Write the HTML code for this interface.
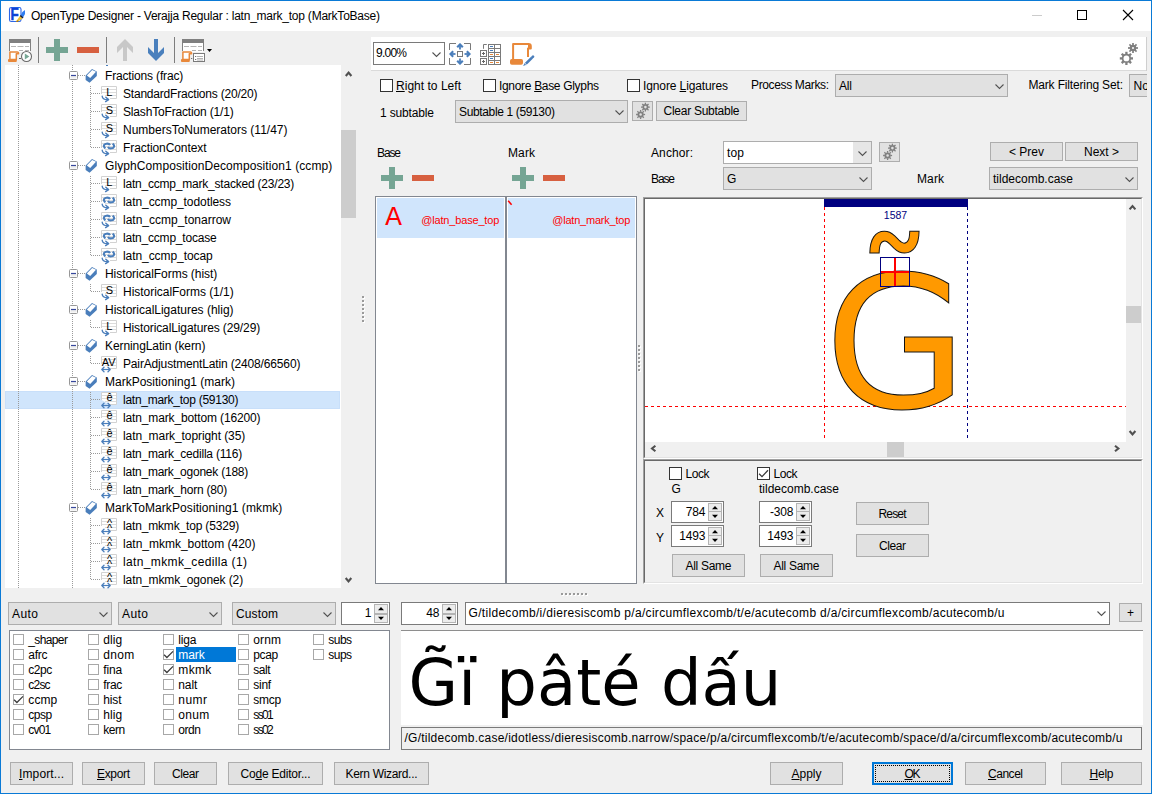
<!DOCTYPE html>
<html><head><meta charset="utf-8"><title>OpenType Designer</title><style>html,body{margin:0;padding:0;background:#f0f0f0;}
#w{position:relative;width:1152px;height:794px;overflow:hidden;font-family:"Liberation Sans",sans-serif;font-size:12px;color:#000;}
#w div,#w span,#w svg{position:absolute;}
#w span{white-space:pre;}
#w u{text-decoration:underline;text-underline-offset:1px;}
</style></head><body><div id="w">
<div style="left:0px;top:0px;width:1152px;height:794px;background:#f0f0f0;"></div>
<div style="left:1px;top:1px;width:1150px;height:30px;background:#fff;"></div>
<svg style="left:8px;top:6px;" width="18" height="18" viewBox="0 0 18 18"><rect x="1.5" y="1.5" width="11.5" height="14" rx="1.8" fill="#fff" stroke="#2a66e8" stroke-width="1.1"/>
<text transform="translate(2.5,14) scale(0.86,1)" font-family="'Liberation Sans',sans-serif" font-weight="bold" font-size="15.6" fill="#0c43d6" stroke="#0c43d6" stroke-width="0.5">F</text>
<path d="M17 4 L14.4 6 L12.5 9.6 L15 11.6 L17 8Z" fill="#2f7df0"/><path d="M12.2 9.6 L15 12" stroke="#1a1a2a" stroke-width="1.6"/>
<path d="M11.8 10.2 L14.4 12.4 L9.2 16 L8 15.6Z" fill="#f0c030"/><path d="M8 15.6 L9.2 16 L10.4 15.2 L9.2 14.2Z" fill="#9a6a10"/></svg>
<span style="left:31px;top:9px;line-height:14px;letter-spacing:-0.23px;">OpenType Designer - Verajja Regular : latn_mark_top (MarkToBase)</span>
<div style="left:1032px;top:15px;width:10px;height:1px;background:#cccccc;"></div>
<div style="left:1077px;top:10px;width:10px;height:10px;border:1px solid #000;box-sizing:border-box;"></div>
<svg style="left:1122px;top:9px;" width="12" height="12" viewBox="0 0 12 12"><path d="M1 1 L11 11 M11 1 L1 11" stroke="#000" stroke-width="1.1" fill="none"/></svg>
<svg style="left:5px;top:36px;" width="30" height="30" viewBox="0 0 30 30"><rect x="4" y="3" width="22" height="4" fill="#808080"/>
<path d="M4.5 7 V15 M25.5 7 V15" stroke="#808080" fill="none"/>
<rect x="5" y="7" width="20" height="9" fill="#fff"/>
<path d="M6 10.5 h5 M12.5 10.5 h6 M20 10.5 h4 M14 14.5 h4 M20 14.5 h4" stroke="#b4b4b4" fill="none"/><path d="M4.9 15.9 H12.4 Q13.5 15.9 13.5 17 V17.8 H11.3 V23.6 H4.9 Z" fill="#fff" stroke="#e8883a" stroke-width="1.5" stroke-linejoin="round"/>
<rect x="3" y="23.1" width="8.8" height="2.9" rx="0.9" fill="#e8883a"/><path d="M14 22.5 h2" stroke="#666" /><circle cx="21.5" cy="20.5" r="5" fill="#fff" stroke="#6a6a6a" stroke-width="1.1"/><path d="M19.8 17.6 L24.4 20.5 L19.8 23.4Z" fill="#78a896"/></svg>
<div style="left:38px;top:37px;width:1px;height:26px;background:#7d7d7d;"></div>
<div style="left:46px;top:47px;width:22px;height:6px;background:#75a594;"></div>
<div style="left:54px;top:39px;width:6px;height:22px;background:#75a594;"></div>
<div style="left:77px;top:47px;width:22px;height:6px;background:#d76040;"></div>
<div style="left:106px;top:37px;width:1px;height:26px;background:#7d7d7d;"></div>
<svg style="left:117px;top:39px;" width="16" height="22" viewBox="0 0 16 22"><polygon points="8,0 16,8 16,14 10,8 10,22 6,22 6,8 0,14 0,8" fill="#c8c8c8"/></svg>
<svg style="left:148px;top:39px;" width="16" height="22" viewBox="0 0 16 22"><polygon points="8,0 16,8 16,14 10,8 10,22 6,22 6,8 0,14 0,8" fill="#4a80bd" transform="translate(0,22) scale(1,-1)"/></svg>
<div style="left:174px;top:37px;width:1px;height:26px;background:#7d7d7d;"></div>
<svg style="left:179px;top:36px;" width="36" height="30" viewBox="0 0 36 30"><rect x="3" y="3" width="22" height="4" fill="#808080"/>
<path d="M3.5 7 V15 M24.5 7 V15" stroke="#808080" fill="none"/>
<rect x="4" y="7" width="20" height="9" fill="#fff"/>
<path d="M5 10.5 h5 M11.5 10.5 h6 M19 10.5 h4 M13 14.5 h4 M19 14.5 h4" stroke="#b4b4b4" fill="none"/><path d="M3.9 15.9 H11.4 Q12.5 15.9 12.5 17 V17.8 H10.3 V23.6 H3.9 Z" fill="#fff" stroke="#e8883a" stroke-width="1.5" stroke-linejoin="round"/>
<rect x="2" y="23.1" width="8.8" height="2.9" rx="0.9" fill="#e8883a"/><rect x="14.5" y="17.5" width="11" height="8" fill="#fff" stroke="#7a7a7a"/><path d="M18 20.5 h6 M18 22.5 h6 M18 24 h6" stroke="#a0a0a0" stroke-width="0.8"/><path d="M16.2 20.5h1M16.2 23.5h1M12.2 22.5h1" stroke="#555"/><path d="M28 13 h5 l-2.5 3z" fill="#000"/></svg>
<div style="left:5px;top:65px;width:336px;height:523px;background:#fff;"></div>
<div style="left:5px;top:391px;width:335px;height:18px;background:#d0e5fc;box-sizing:border-box;border:1px solid #c8dffa;"></div>
<span style="left:105px;top:69px;line-height:14px;letter-spacing:-0.159px;">Fractions (frac)</span>
<span style="left:123px;top:87px;line-height:14px;letter-spacing:-0.204px;">StandardFractions (20/20)</span>
<span style="left:123px;top:105px;line-height:14px;letter-spacing:-0.167px;">SlashToFraction (1/1)</span>
<span style="left:123px;top:123px;line-height:14px;letter-spacing:-0.001px;">NumbersToNumerators (11/47)</span>
<span style="left:123px;top:141px;line-height:14px;letter-spacing:-0.086px;">FractionContext</span>
<span style="left:105px;top:159px;line-height:14px;letter-spacing:0.089px;">GlyphCompositionDecomposition1 (ccmp)</span>
<span style="left:123px;top:177px;line-height:14px;letter-spacing:-0.211px;">latn_ccmp_mark_stacked (23/23)</span>
<span style="left:123px;top:195px;line-height:14px;letter-spacing:-0.078px;">latn_ccmp_todotless</span>
<span style="left:123px;top:213px;line-height:14px;letter-spacing:-0.004px;">latn_ccmp_tonarrow</span>
<span style="left:123px;top:231px;line-height:14px;letter-spacing:-0.202px;">latn_ccmp_tocase</span>
<span style="left:123px;top:249px;line-height:14px;letter-spacing:-0.074px;">latn_ccmp_tocap</span>
<span style="left:105px;top:267px;line-height:14px;letter-spacing:-0.05px;">HistoricalForms (hist)</span>
<span style="left:123px;top:285px;line-height:14px;letter-spacing:-0.033px;">HistoricalForms (1/1)</span>
<span style="left:105px;top:303px;line-height:14px;letter-spacing:-0.005px;">HistoricalLigatures (hlig)</span>
<span style="left:123px;top:321px;line-height:14px;letter-spacing:-0.11px;">HistoricalLigatures (29/29)</span>
<span style="left:105px;top:339px;line-height:14px;letter-spacing:-0.092px;">KerningLatin (kern)</span>
<span style="left:123px;top:357px;line-height:14px;letter-spacing:-0.152px;">PairAdjustmentLatin (2408/66560)</span>
<span style="left:105px;top:375px;line-height:14px;letter-spacing:-0.002px;">MarkPositioning1 (mark)</span>
<span style="left:123px;top:393px;line-height:14px;letter-spacing:-0.262px;">latn_mark_top (59130)</span>
<span style="left:123px;top:411px;line-height:14px;letter-spacing:-0.137px;">latn_mark_bottom (16200)</span>
<span style="left:123px;top:429px;line-height:14px;letter-spacing:-0.08px;">latn_mark_topright (35)</span>
<span style="left:123px;top:447px;line-height:14px;letter-spacing:-0.211px;">latn_mark_cedilla (116)</span>
<span style="left:123px;top:465px;line-height:14px;letter-spacing:-0.228px;">latn_mark_ogonek (188)</span>
<span style="left:123px;top:483px;line-height:14px;letter-spacing:-0.209px;">latn_mark_horn (80)</span>
<span style="left:105px;top:501px;line-height:14px;letter-spacing:0.093px;">MarkToMarkPositioning1 (mkmk)</span>
<span style="left:123px;top:519px;line-height:14px;letter-spacing:-0.168px;">latn_mkmk_top (5329)</span>
<span style="left:123px;top:537px;line-height:14px;letter-spacing:-0.011px;">latn_mkmk_bottom (420)</span>
<span style="left:123px;top:555px;line-height:14px;letter-spacing:0.364px;">latn_mkmk_cedilla (1)</span>
<span style="left:123px;top:573px;line-height:14px;letter-spacing:-0.098px;">latn_mkmk_ogonek (2)</span>
<svg style="left:0px;top:0px;pointer-events:none;" width="360" height="600" viewBox="0 0 360 600"><path d="M18.5 65 V588 M72.5 65 V588" stroke="#9a9a9a" stroke-width="1" stroke-dasharray="1 1" fill="none"/><path d="M78 75.5 H85" stroke="#9a9a9a" stroke-width="1" stroke-dasharray="1 1" fill="none"/><path d="M90.5 86 V148" stroke="#9a9a9a" stroke-width="1" stroke-dasharray="1 1" fill="none"/><path d="M91 93.5 H101" stroke="#9a9a9a" stroke-width="1" stroke-dasharray="1 1" fill="none"/><path d="M91 111.5 H101" stroke="#9a9a9a" stroke-width="1" stroke-dasharray="1 1" fill="none"/><path d="M91 129.5 H101" stroke="#9a9a9a" stroke-width="1" stroke-dasharray="1 1" fill="none"/><path d="M91 147.5 H101" stroke="#9a9a9a" stroke-width="1" stroke-dasharray="1 1" fill="none"/><path d="M78 165.5 H85" stroke="#9a9a9a" stroke-width="1" stroke-dasharray="1 1" fill="none"/><path d="M90.5 176 V256" stroke="#9a9a9a" stroke-width="1" stroke-dasharray="1 1" fill="none"/><path d="M91 183.5 H101" stroke="#9a9a9a" stroke-width="1" stroke-dasharray="1 1" fill="none"/><path d="M91 201.5 H101" stroke="#9a9a9a" stroke-width="1" stroke-dasharray="1 1" fill="none"/><path d="M91 219.5 H101" stroke="#9a9a9a" stroke-width="1" stroke-dasharray="1 1" fill="none"/><path d="M91 237.5 H101" stroke="#9a9a9a" stroke-width="1" stroke-dasharray="1 1" fill="none"/><path d="M91 255.5 H101" stroke="#9a9a9a" stroke-width="1" stroke-dasharray="1 1" fill="none"/><path d="M78 273.5 H85" stroke="#9a9a9a" stroke-width="1" stroke-dasharray="1 1" fill="none"/><path d="M90.5 284 V292" stroke="#9a9a9a" stroke-width="1" stroke-dasharray="1 1" fill="none"/><path d="M91 291.5 H101" stroke="#9a9a9a" stroke-width="1" stroke-dasharray="1 1" fill="none"/><path d="M78 309.5 H85" stroke="#9a9a9a" stroke-width="1" stroke-dasharray="1 1" fill="none"/><path d="M90.5 320 V328" stroke="#9a9a9a" stroke-width="1" stroke-dasharray="1 1" fill="none"/><path d="M91 327.5 H101" stroke="#9a9a9a" stroke-width="1" stroke-dasharray="1 1" fill="none"/><path d="M78 345.5 H85" stroke="#9a9a9a" stroke-width="1" stroke-dasharray="1 1" fill="none"/><path d="M90.5 356 V364" stroke="#9a9a9a" stroke-width="1" stroke-dasharray="1 1" fill="none"/><path d="M91 363.5 H101" stroke="#9a9a9a" stroke-width="1" stroke-dasharray="1 1" fill="none"/><path d="M78 381.5 H85" stroke="#9a9a9a" stroke-width="1" stroke-dasharray="1 1" fill="none"/><path d="M90.5 392 V490" stroke="#9a9a9a" stroke-width="1" stroke-dasharray="1 1" fill="none"/><path d="M91 399.5 H101" stroke="#9a9a9a" stroke-width="1" stroke-dasharray="1 1" fill="none"/><path d="M91 417.5 H101" stroke="#9a9a9a" stroke-width="1" stroke-dasharray="1 1" fill="none"/><path d="M91 435.5 H101" stroke="#9a9a9a" stroke-width="1" stroke-dasharray="1 1" fill="none"/><path d="M91 453.5 H101" stroke="#9a9a9a" stroke-width="1" stroke-dasharray="1 1" fill="none"/><path d="M91 471.5 H101" stroke="#9a9a9a" stroke-width="1" stroke-dasharray="1 1" fill="none"/><path d="M91 489.5 H101" stroke="#9a9a9a" stroke-width="1" stroke-dasharray="1 1" fill="none"/><path d="M78 507.5 H85" stroke="#9a9a9a" stroke-width="1" stroke-dasharray="1 1" fill="none"/><path d="M90.5 518 V580" stroke="#9a9a9a" stroke-width="1" stroke-dasharray="1 1" fill="none"/><path d="M91 525.5 H101" stroke="#9a9a9a" stroke-width="1" stroke-dasharray="1 1" fill="none"/><path d="M91 543.5 H101" stroke="#9a9a9a" stroke-width="1" stroke-dasharray="1 1" fill="none"/><path d="M91 561.5 H101" stroke="#9a9a9a" stroke-width="1" stroke-dasharray="1 1" fill="none"/><path d="M91 579.5 H101" stroke="#9a9a9a" stroke-width="1" stroke-dasharray="1 1" fill="none"/><rect x="69.5" y="71.5" width="8" height="8" rx="1" fill="#fff" stroke="#979797"/><rect x="70.5" y="76" width="6" height="2.5" fill="#eee"/><path d="M71 75.5 H76" stroke="#36479c" stroke-width="1.2"/><path d="M85.6 75.5 L92 69 L96.8 71.4 L96.8 76 L89.6 82.8 L85.6 80 Z" fill="#4a7ebb"/><path d="M86.8 75.5 L92.2 70 L96 71.8 L90.2 77.9 Z" fill="#fff"/><path d="M101.5 94 V86.5 H116.5 V98.5 H110" stroke="#d2d2d2" fill="#fff"/><path d="M102 89.5 H116 M102 92.5 H116 M105 95.5 H116" stroke="#dcdcdc" fill="none"/><text x="109.3" y="96.2" text-anchor="middle" font-family="'Liberation Sans',sans-serif" font-size="11" font-weight="normal" fill="#000">L</text><path d="M102.2 96.2 C102.5 99 105 99.8 108 99.6" stroke="#4a7ebb" stroke-width="1.4" fill="none" stroke-linecap="round"/><path d="M105.8 97.2 L108.6 99.6 L105.6 101.6" stroke="#4a7ebb" stroke-width="1.4" fill="none" stroke-linecap="round" stroke-linejoin="round"/><path d="M101.5 112 V104.5 H116.5 V116.5 H110" stroke="#d2d2d2" fill="#fff"/><path d="M102 107.5 H116 M102 110.5 H116 M105 113.5 H116" stroke="#dcdcdc" fill="none"/><text x="109.3" y="114.2" text-anchor="middle" font-family="'Liberation Sans',sans-serif" font-size="11" font-weight="normal" fill="#000">S</text><path d="M102.2 114.2 C102.5 117 105 117.8 108 117.6" stroke="#4a7ebb" stroke-width="1.4" fill="none" stroke-linecap="round"/><path d="M105.8 115.2 L108.6 117.6 L105.6 119.6" stroke="#4a7ebb" stroke-width="1.4" fill="none" stroke-linecap="round" stroke-linejoin="round"/><path d="M101.5 130 V122.5 H116.5 V134.5 H110" stroke="#d2d2d2" fill="#fff"/><path d="M102 125.5 H116 M102 128.5 H116 M105 131.5 H116" stroke="#dcdcdc" fill="none"/><text x="109.3" y="132.2" text-anchor="middle" font-family="'Liberation Sans',sans-serif" font-size="11" font-weight="normal" fill="#000">S</text><path d="M102.2 132.2 C102.5 135 105 135.8 108 135.6" stroke="#4a7ebb" stroke-width="1.4" fill="none" stroke-linecap="round"/><path d="M105.8 133.2 L108.6 135.6 L105.6 137.6" stroke="#4a7ebb" stroke-width="1.4" fill="none" stroke-linecap="round" stroke-linejoin="round"/><path d="M101.5 148 V140.5 H116.5 V152.5 H110" stroke="#d2d2d2" fill="#fff"/><path d="M102 143.5 H116 M102 146.5 H116 M105 149.5 H116" stroke="#dcdcdc" fill="none"/><path d="M110 145.2 C109.3 143.6 107.5 143.6 106.5 143.7 C104.5 143.9 103.6 145.2 104 146.6 C104.2 147.4 104.7 147.9 105.4 148.4" stroke="#4a7ebb" stroke-width="2.1" fill="none"/><path d="M108 146.8 C108.7 148.4 110.5 148.4 111.5 148.3 C113.5 148.1 114.4 146.8 114 145.4 C113.8 144.6 113.3 144.1 112.6 143.6" stroke="#4a7ebb" stroke-width="2.1" fill="none"/><path d="M102.2 150.2 C102.5 153 105 153.8 108 153.6" stroke="#4a7ebb" stroke-width="1.4" fill="none" stroke-linecap="round"/><path d="M105.8 151.2 L108.6 153.6 L105.6 155.6" stroke="#4a7ebb" stroke-width="1.4" fill="none" stroke-linecap="round" stroke-linejoin="round"/><rect x="69.5" y="161.5" width="8" height="8" rx="1" fill="#fff" stroke="#979797"/><rect x="70.5" y="166" width="6" height="2.5" fill="#eee"/><path d="M71 165.5 H76" stroke="#36479c" stroke-width="1.2"/><path d="M85.6 165.5 L92 159 L96.8 161.4 L96.8 166 L89.6 172.8 L85.6 170 Z" fill="#4a7ebb"/><path d="M86.8 165.5 L92.2 160 L96 161.8 L90.2 167.9 Z" fill="#fff"/><path d="M101.5 184 V176.5 H116.5 V188.5 H110" stroke="#d2d2d2" fill="#fff"/><path d="M102 179.5 H116 M102 182.5 H116 M105 185.5 H116" stroke="#dcdcdc" fill="none"/><text x="109.3" y="186.2" text-anchor="middle" font-family="'Liberation Sans',sans-serif" font-size="11" font-weight="normal" fill="#000">L</text><path d="M102.2 186.2 C102.5 189 105 189.8 108 189.6" stroke="#4a7ebb" stroke-width="1.4" fill="none" stroke-linecap="round"/><path d="M105.8 187.2 L108.6 189.6 L105.6 191.6" stroke="#4a7ebb" stroke-width="1.4" fill="none" stroke-linecap="round" stroke-linejoin="round"/><path d="M101.5 202 V194.5 H116.5 V206.5 H110" stroke="#d2d2d2" fill="#fff"/><path d="M102 197.5 H116 M102 200.5 H116 M105 203.5 H116" stroke="#dcdcdc" fill="none"/><path d="M110 199.2 C109.3 197.6 107.5 197.6 106.5 197.7 C104.5 197.9 103.6 199.2 104 200.6 C104.2 201.4 104.7 201.9 105.4 202.4" stroke="#4a7ebb" stroke-width="2.1" fill="none"/><path d="M108 200.8 C108.7 202.4 110.5 202.4 111.5 202.3 C113.5 202.1 114.4 200.8 114 199.4 C113.8 198.6 113.3 198.1 112.6 197.6" stroke="#4a7ebb" stroke-width="2.1" fill="none"/><path d="M102.2 204.2 C102.5 207 105 207.8 108 207.6" stroke="#4a7ebb" stroke-width="1.4" fill="none" stroke-linecap="round"/><path d="M105.8 205.2 L108.6 207.6 L105.6 209.6" stroke="#4a7ebb" stroke-width="1.4" fill="none" stroke-linecap="round" stroke-linejoin="round"/><path d="M101.5 220 V212.5 H116.5 V224.5 H110" stroke="#d2d2d2" fill="#fff"/><path d="M102 215.5 H116 M102 218.5 H116 M105 221.5 H116" stroke="#dcdcdc" fill="none"/><path d="M110 217.2 C109.3 215.6 107.5 215.6 106.5 215.7 C104.5 215.9 103.6 217.2 104 218.6 C104.2 219.4 104.7 219.9 105.4 220.4" stroke="#4a7ebb" stroke-width="2.1" fill="none"/><path d="M108 218.8 C108.7 220.4 110.5 220.4 111.5 220.3 C113.5 220.1 114.4 218.8 114 217.4 C113.8 216.6 113.3 216.1 112.6 215.6" stroke="#4a7ebb" stroke-width="2.1" fill="none"/><path d="M102.2 222.2 C102.5 225 105 225.8 108 225.6" stroke="#4a7ebb" stroke-width="1.4" fill="none" stroke-linecap="round"/><path d="M105.8 223.2 L108.6 225.6 L105.6 227.6" stroke="#4a7ebb" stroke-width="1.4" fill="none" stroke-linecap="round" stroke-linejoin="round"/><path d="M101.5 238 V230.5 H116.5 V242.5 H110" stroke="#d2d2d2" fill="#fff"/><path d="M102 233.5 H116 M102 236.5 H116 M105 239.5 H116" stroke="#dcdcdc" fill="none"/><path d="M110 235.2 C109.3 233.6 107.5 233.6 106.5 233.7 C104.5 233.9 103.6 235.2 104 236.6 C104.2 237.4 104.7 237.9 105.4 238.4" stroke="#4a7ebb" stroke-width="2.1" fill="none"/><path d="M108 236.8 C108.7 238.4 110.5 238.4 111.5 238.3 C113.5 238.1 114.4 236.8 114 235.4 C113.8 234.6 113.3 234.1 112.6 233.6" stroke="#4a7ebb" stroke-width="2.1" fill="none"/><path d="M102.2 240.2 C102.5 243 105 243.8 108 243.6" stroke="#4a7ebb" stroke-width="1.4" fill="none" stroke-linecap="round"/><path d="M105.8 241.2 L108.6 243.6 L105.6 245.6" stroke="#4a7ebb" stroke-width="1.4" fill="none" stroke-linecap="round" stroke-linejoin="round"/><path d="M101.5 256 V248.5 H116.5 V260.5 H110" stroke="#d2d2d2" fill="#fff"/><path d="M102 251.5 H116 M102 254.5 H116 M105 257.5 H116" stroke="#dcdcdc" fill="none"/><path d="M110 253.2 C109.3 251.6 107.5 251.6 106.5 251.7 C104.5 251.9 103.6 253.2 104 254.6 C104.2 255.4 104.7 255.9 105.4 256.4" stroke="#4a7ebb" stroke-width="2.1" fill="none"/><path d="M108 254.8 C108.7 256.4 110.5 256.4 111.5 256.3 C113.5 256.1 114.4 254.8 114 253.4 C113.8 252.6 113.3 252.1 112.6 251.6" stroke="#4a7ebb" stroke-width="2.1" fill="none"/><path d="M102.2 258.2 C102.5 261 105 261.8 108 261.6" stroke="#4a7ebb" stroke-width="1.4" fill="none" stroke-linecap="round"/><path d="M105.8 259.2 L108.6 261.6 L105.6 263.6" stroke="#4a7ebb" stroke-width="1.4" fill="none" stroke-linecap="round" stroke-linejoin="round"/><rect x="69.5" y="269.5" width="8" height="8" rx="1" fill="#fff" stroke="#979797"/><rect x="70.5" y="274" width="6" height="2.5" fill="#eee"/><path d="M71 273.5 H76" stroke="#36479c" stroke-width="1.2"/><path d="M85.6 273.5 L92 267 L96.8 269.4 L96.8 274 L89.6 280.8 L85.6 278 Z" fill="#4a7ebb"/><path d="M86.8 273.5 L92.2 268 L96 269.8 L90.2 275.9 Z" fill="#fff"/><path d="M101.5 292 V284.5 H116.5 V296.5 H110" stroke="#d2d2d2" fill="#fff"/><path d="M102 287.5 H116 M102 290.5 H116 M105 293.5 H116" stroke="#dcdcdc" fill="none"/><text x="109.3" y="294.2" text-anchor="middle" font-family="'Liberation Sans',sans-serif" font-size="11" font-weight="normal" fill="#000">S</text><path d="M102.2 294.2 C102.5 297 105 297.8 108 297.6" stroke="#4a7ebb" stroke-width="1.4" fill="none" stroke-linecap="round"/><path d="M105.8 295.2 L108.6 297.6 L105.6 299.6" stroke="#4a7ebb" stroke-width="1.4" fill="none" stroke-linecap="round" stroke-linejoin="round"/><rect x="69.5" y="305.5" width="8" height="8" rx="1" fill="#fff" stroke="#979797"/><rect x="70.5" y="310" width="6" height="2.5" fill="#eee"/><path d="M71 309.5 H76" stroke="#36479c" stroke-width="1.2"/><path d="M85.6 309.5 L92 303 L96.8 305.4 L96.8 310 L89.6 316.8 L85.6 314 Z" fill="#4a7ebb"/><path d="M86.8 309.5 L92.2 304 L96 305.8 L90.2 311.9 Z" fill="#fff"/><path d="M101.5 328 V320.5 H116.5 V332.5 H110" stroke="#d2d2d2" fill="#fff"/><path d="M102 323.5 H116 M102 326.5 H116 M105 329.5 H116" stroke="#dcdcdc" fill="none"/><text x="109.3" y="330.2" text-anchor="middle" font-family="'Liberation Sans',sans-serif" font-size="11" font-weight="normal" fill="#000">L</text><path d="M102.2 330.2 C102.5 333 105 333.8 108 333.6" stroke="#4a7ebb" stroke-width="1.4" fill="none" stroke-linecap="round"/><path d="M105.8 331.2 L108.6 333.6 L105.6 335.6" stroke="#4a7ebb" stroke-width="1.4" fill="none" stroke-linecap="round" stroke-linejoin="round"/><rect x="69.5" y="341.5" width="8" height="8" rx="1" fill="#fff" stroke="#979797"/><rect x="70.5" y="346" width="6" height="2.5" fill="#eee"/><path d="M71 345.5 H76" stroke="#36479c" stroke-width="1.2"/><path d="M85.6 345.5 L92 339 L96.8 341.4 L96.8 346 L89.6 352.8 L85.6 350 Z" fill="#4a7ebb"/><path d="M86.8 345.5 L92.2 340 L96 341.8 L90.2 347.9 Z" fill="#fff"/><path d="M101.5 364 V356.5 H116.5 V368.5 H110" stroke="#d2d2d2" fill="#fff"/><path d="M102 359.5 H116 M102 362.5 H116 M105 365.5 H116" stroke="#dcdcdc" fill="none"/><text x="108.6" y="365.6" text-anchor="middle" font-family="'Liberation Sans',sans-serif" font-size="11" font-weight="normal" fill="#000">AV</text><path d="M102 369.5 H110" stroke="#4a7ebb" stroke-width="1.2" fill="none"/><path d="M104 367.3 L101.8 369.5 L104 371.7 M108 367.3 L110.2 369.5 L108 371.7" stroke="#4a7ebb" stroke-width="1.3" fill="none" stroke-linecap="round" stroke-linejoin="round"/><rect x="69.5" y="377.5" width="8" height="8" rx="1" fill="#fff" stroke="#979797"/><rect x="70.5" y="382" width="6" height="2.5" fill="#eee"/><path d="M71 381.5 H76" stroke="#36479c" stroke-width="1.2"/><path d="M85.6 381.5 L92 375 L96.8 377.4 L96.8 382 L89.6 388.8 L85.6 386 Z" fill="#4a7ebb"/><path d="M86.8 381.5 L92.2 376 L96 377.8 L90.2 383.9 Z" fill="#fff"/><path d="M101.5 400 V392.5 H116.5 V404.5 H110" stroke="#d2d2d2" fill="#fff"/><path d="M102 395.5 H116 M102 398.5 H116 M105 401.5 H116" stroke="#dcdcdc" fill="none"/><text x="109.6" y="401.3" text-anchor="middle" font-family="'Liberation Sans',sans-serif" font-size="11" font-weight="normal" fill="#000">ê</text><path d="M102 405.5 H110" stroke="#4a7ebb" stroke-width="1.2" fill="none"/><path d="M104 403.3 L101.8 405.5 L104 407.7 M108 403.3 L110.2 405.5 L108 407.7" stroke="#4a7ebb" stroke-width="1.3" fill="none" stroke-linecap="round" stroke-linejoin="round"/><path d="M101.5 418 V410.5 H116.5 V422.5 H110" stroke="#d2d2d2" fill="#fff"/><path d="M102 413.5 H116 M102 416.5 H116 M105 419.5 H116" stroke="#dcdcdc" fill="none"/><text x="109.6" y="419.3" text-anchor="middle" font-family="'Liberation Sans',sans-serif" font-size="11" font-weight="normal" fill="#000">ê</text><path d="M102 423.5 H110" stroke="#4a7ebb" stroke-width="1.2" fill="none"/><path d="M104 421.3 L101.8 423.5 L104 425.7 M108 421.3 L110.2 423.5 L108 425.7" stroke="#4a7ebb" stroke-width="1.3" fill="none" stroke-linecap="round" stroke-linejoin="round"/><path d="M101.5 436 V428.5 H116.5 V440.5 H110" stroke="#d2d2d2" fill="#fff"/><path d="M102 431.5 H116 M102 434.5 H116 M105 437.5 H116" stroke="#dcdcdc" fill="none"/><text x="109.6" y="437.3" text-anchor="middle" font-family="'Liberation Sans',sans-serif" font-size="11" font-weight="normal" fill="#000">ê</text><path d="M102 441.5 H110" stroke="#4a7ebb" stroke-width="1.2" fill="none"/><path d="M104 439.3 L101.8 441.5 L104 443.7 M108 439.3 L110.2 441.5 L108 443.7" stroke="#4a7ebb" stroke-width="1.3" fill="none" stroke-linecap="round" stroke-linejoin="round"/><path d="M101.5 454 V446.5 H116.5 V458.5 H110" stroke="#d2d2d2" fill="#fff"/><path d="M102 449.5 H116 M102 452.5 H116 M105 455.5 H116" stroke="#dcdcdc" fill="none"/><text x="109.6" y="455.3" text-anchor="middle" font-family="'Liberation Sans',sans-serif" font-size="11" font-weight="normal" fill="#000">ê</text><path d="M102 459.5 H110" stroke="#4a7ebb" stroke-width="1.2" fill="none"/><path d="M104 457.3 L101.8 459.5 L104 461.7 M108 457.3 L110.2 459.5 L108 461.7" stroke="#4a7ebb" stroke-width="1.3" fill="none" stroke-linecap="round" stroke-linejoin="round"/><path d="M101.5 472 V464.5 H116.5 V476.5 H110" stroke="#d2d2d2" fill="#fff"/><path d="M102 467.5 H116 M102 470.5 H116 M105 473.5 H116" stroke="#dcdcdc" fill="none"/><text x="109.6" y="473.3" text-anchor="middle" font-family="'Liberation Sans',sans-serif" font-size="11" font-weight="normal" fill="#000">ê</text><path d="M102 477.5 H110" stroke="#4a7ebb" stroke-width="1.2" fill="none"/><path d="M104 475.3 L101.8 477.5 L104 479.7 M108 475.3 L110.2 477.5 L108 479.7" stroke="#4a7ebb" stroke-width="1.3" fill="none" stroke-linecap="round" stroke-linejoin="round"/><path d="M101.5 490 V482.5 H116.5 V494.5 H110" stroke="#d2d2d2" fill="#fff"/><path d="M102 485.5 H116 M102 488.5 H116 M105 491.5 H116" stroke="#dcdcdc" fill="none"/><text x="109.6" y="491.3" text-anchor="middle" font-family="'Liberation Sans',sans-serif" font-size="11" font-weight="normal" fill="#000">ê</text><path d="M102 495.5 H110" stroke="#4a7ebb" stroke-width="1.2" fill="none"/><path d="M104 493.3 L101.8 495.5 L104 497.7 M108 493.3 L110.2 495.5 L108 497.7" stroke="#4a7ebb" stroke-width="1.3" fill="none" stroke-linecap="round" stroke-linejoin="round"/><rect x="69.5" y="503.5" width="8" height="8" rx="1" fill="#fff" stroke="#979797"/><rect x="70.5" y="508" width="6" height="2.5" fill="#eee"/><path d="M71 507.5 H76" stroke="#36479c" stroke-width="1.2"/><path d="M85.6 507.5 L92 501 L96.8 503.4 L96.8 508 L89.6 514.8 L85.6 512 Z" fill="#4a7ebb"/><path d="M86.8 507.5 L92.2 502 L96 503.8 L90.2 509.9 Z" fill="#fff"/><path d="M101.5 526 V518.5 H116.5 V530.5 H110" stroke="#d2d2d2" fill="#fff"/><path d="M102 521.5 H116 M102 524.5 H116 M105 527.5 H116" stroke="#dcdcdc" fill="none"/><text x="109.5" y="527.2" text-anchor="middle" font-family="'Liberation Sans',sans-serif" font-size="11" font-weight="normal" fill="#000">^</text><text x="109.5" y="531.6" text-anchor="middle" font-family="'Liberation Sans',sans-serif" font-size="11" font-weight="normal" fill="#000">^</text><path d="M102 531.5 H110" stroke="#4a7ebb" stroke-width="1.2" fill="none"/><path d="M104 529.3 L101.8 531.5 L104 533.7 M108 529.3 L110.2 531.5 L108 533.7" stroke="#4a7ebb" stroke-width="1.3" fill="none" stroke-linecap="round" stroke-linejoin="round"/><path d="M101.5 544 V536.5 H116.5 V548.5 H110" stroke="#d2d2d2" fill="#fff"/><path d="M102 539.5 H116 M102 542.5 H116 M105 545.5 H116" stroke="#dcdcdc" fill="none"/><text x="109.5" y="545.2" text-anchor="middle" font-family="'Liberation Sans',sans-serif" font-size="11" font-weight="normal" fill="#000">^</text><text x="109.5" y="549.6" text-anchor="middle" font-family="'Liberation Sans',sans-serif" font-size="11" font-weight="normal" fill="#000">^</text><path d="M102 549.5 H110" stroke="#4a7ebb" stroke-width="1.2" fill="none"/><path d="M104 547.3 L101.8 549.5 L104 551.7 M108 547.3 L110.2 549.5 L108 551.7" stroke="#4a7ebb" stroke-width="1.3" fill="none" stroke-linecap="round" stroke-linejoin="round"/><path d="M101.5 562 V554.5 H116.5 V566.5 H110" stroke="#d2d2d2" fill="#fff"/><path d="M102 557.5 H116 M102 560.5 H116 M105 563.5 H116" stroke="#dcdcdc" fill="none"/><text x="109.5" y="563.2" text-anchor="middle" font-family="'Liberation Sans',sans-serif" font-size="11" font-weight="normal" fill="#000">^</text><text x="109.5" y="567.6" text-anchor="middle" font-family="'Liberation Sans',sans-serif" font-size="11" font-weight="normal" fill="#000">^</text><path d="M102 567.5 H110" stroke="#4a7ebb" stroke-width="1.2" fill="none"/><path d="M104 565.3 L101.8 567.5 L104 569.7 M108 565.3 L110.2 567.5 L108 569.7" stroke="#4a7ebb" stroke-width="1.3" fill="none" stroke-linecap="round" stroke-linejoin="round"/><path d="M101.5 580 V572.5 H116.5 V584.5 H110" stroke="#d2d2d2" fill="#fff"/><path d="M102 575.5 H116 M102 578.5 H116 M105 581.5 H116" stroke="#dcdcdc" fill="none"/><text x="109.5" y="581.2" text-anchor="middle" font-family="'Liberation Sans',sans-serif" font-size="11" font-weight="normal" fill="#000">^</text><text x="109.5" y="585.6" text-anchor="middle" font-family="'Liberation Sans',sans-serif" font-size="11" font-weight="normal" fill="#000">^</text><path d="M102 585.5 H110" stroke="#4a7ebb" stroke-width="1.2" fill="none"/><path d="M104 583.3 L101.8 585.5 L104 587.7 M108 583.3 L110.2 585.5 L108 587.7" stroke="#4a7ebb" stroke-width="1.3" fill="none" stroke-linecap="round" stroke-linejoin="round"/></svg>
<div style="left:106px;top:65px;width:2px;height:1px;background:#4a7ebb;"></div>
<svg style="left:341px;top:65px;" width="17" height="523" viewBox="0 0 17 523"><rect x="0" y="65" width="15" height="88" fill="#cdcdcd"/><path d="M4.8 11 L7.6 7.6 L10.4 11" stroke="#505050" stroke-width="2.1" fill="none"/><path d="M4.7 513 L7.5 516.4 L10.3 513" stroke="#505050" stroke-width="2.1" fill="none"/></svg>
<svg style="left:362px;top:296px;" width="3" height="28" viewBox="0 0 3 28"><rect x="1" y="1" width="2" height="2" fill="#fff"/><rect x="0" y="0" width="2" height="2" fill="#9a9a9a"/><rect x="1" y="5" width="2" height="2" fill="#fff"/><rect x="0" y="4" width="2" height="2" fill="#9a9a9a"/><rect x="1" y="9" width="2" height="2" fill="#fff"/><rect x="0" y="8" width="2" height="2" fill="#9a9a9a"/><rect x="1" y="13" width="2" height="2" fill="#fff"/><rect x="0" y="12" width="2" height="2" fill="#9a9a9a"/><rect x="1" y="17" width="2" height="2" fill="#fff"/><rect x="0" y="16" width="2" height="2" fill="#9a9a9a"/><rect x="1" y="21" width="2" height="2" fill="#fff"/><rect x="0" y="20" width="2" height="2" fill="#9a9a9a"/><rect x="1" y="25" width="2" height="2" fill="#fff"/><rect x="0" y="24" width="2" height="2" fill="#9a9a9a"/></svg>
<div style="left:371px;top:37px;width:775px;height:33px;background:#fff;"></div>
<div style="left:371px;top:70px;width:775px;height:1px;background:#dadada;"></div>
<div style="left:1146px;top:37px;width:1px;height:34px;background:#cfcfcf;"></div>
<div style="left:373px;top:42px;width:72px;height:23px;background:#fff;border:1px solid #7a7a7a;box-sizing:border-box;"></div>
<svg style="left:430.5px;top:50.5px;" width="11" height="8" viewBox="0 0 11 8"><path d="M1.5 1.5 L5.5 5.4 L9.5 1.5" stroke="#505050" stroke-width="1.05" fill="none"/></svg>
<span style="left:376px;top:46px;line-height:14px;letter-spacing:-0.758px;">9.00%</span>
<svg style="left:449px;top:43px;" width="22" height="22" viewBox="0 0 22 22"><path d="M0.5 7 V0.5 H7 M15 0.5 H21.5 V7 M21.5 15 V21.5 H15 M7 21.5 H0.5 V15" stroke="#7a7a7a" fill="none"/><rect x="8.5" y="8.5" width="5" height="5" fill="#fff" stroke="#7a7a7a"/><g transform="rotate(0 11 11)"><path d="M11 1.2 V6.5" stroke="#4a7ebb" stroke-width="1.8"/><path d="M8.2 4.2 L11 1.4 L13.8 4.2" stroke="#4a7ebb" stroke-width="2.1" fill="none" stroke-linejoin="miter"/></g><g transform="rotate(90 11 11)"><path d="M11 1.2 V6.5" stroke="#4a7ebb" stroke-width="1.8"/><path d="M8.2 4.2 L11 1.4 L13.8 4.2" stroke="#4a7ebb" stroke-width="2.1" fill="none" stroke-linejoin="miter"/></g><g transform="rotate(180 11 11)"><path d="M11 1.2 V6.5" stroke="#4a7ebb" stroke-width="1.8"/><path d="M8.2 4.2 L11 1.4 L13.8 4.2" stroke="#4a7ebb" stroke-width="2.1" fill="none" stroke-linejoin="miter"/></g><g transform="rotate(270 11 11)"><path d="M11 1.2 V6.5" stroke="#4a7ebb" stroke-width="1.8"/><path d="M8.2 4.2 L11 1.4 L13.8 4.2" stroke="#4a7ebb" stroke-width="2.1" fill="none" stroke-linejoin="miter"/></g></svg>
<svg style="left:480px;top:44px;" width="22" height="22" viewBox="0 0 22 22"><path d="M3.5 4.8 V0.5 H6.8" stroke="#7a7a7a" fill="none"/><rect x="0.5" y="6.5" width="6" height="6" fill="#fff" stroke="#7a7a7a"/><rect x="0.5" y="14.5" width="6" height="6" fill="#fff" stroke="#7a7a7a"/><path d="M2 9.5 h3 M3.5 8 v3 M2 17.5 h3 M3.5 16 v3" stroke="#666"/><rect x="8.5" y="0.5" width="12" height="20" fill="#fff" stroke="#7a7a7a"/><path d="M14.5 0.5 V20.5 M8.5 4.5 H20.5 M8.5 8.5 H20.5 M8.5 12.5 H20.5 M8.5 16.5 H20.5" stroke="#7a7a7a" fill="none"/><path d="M10 2.5 h3 M10 6.5 h3 M10 14.5 h3" stroke="#4a7ebb"/><path d="M10 10.5 h3 M16 10.5 h3 M10 18.5 h3 M16 18.5 h3" stroke="#e8883a"/></svg>
<svg style="left:510px;top:43px;" width="26" height="24" viewBox="0 0 26 24"><rect x="3" y="1" width="15" height="15" fill="#fff"/><path d="M3.1 16 V1 H18.6 Q20.8 1 20.8 3 V5.6 H18 V14" fill="none" stroke="#e8883a" stroke-width="2" stroke-linejoin="round"/><path d="M18 1 h1 q1.8 0 1.8 2 v2.6 h-2.8z" fill="#e8883a"/><rect x="0" y="15.9" width="13" height="5.8" rx="1.8" fill="#e8883a"/><path d="M22 14.6 L15.2 21.4" stroke="#4a7ebb" stroke-width="2.7"/><path d="M23 13.6 L22.5 14.1" stroke="#4a7ebb" stroke-width="2.7" stroke-linecap="round"/><path d="M14.6 20.4 L13 23 L15.9 21.9Z" fill="#4a7ebb"/><path d="M14 19.2 L16.8 22" stroke="#fff" stroke-width="0.7"/></svg>
<svg style="left:1119px;top:43px;" width="20" height="23" viewBox="0 0 20 23"><g transform="scale(1.0)"><circle cx="7.4" cy="15.4" r="3.8" fill="none" stroke="#7f7f7f" stroke-width="1.8000000000000003"/><path d="M11.60 15.40 L14.00 15.40" stroke="#7f7f7f" stroke-width="2.3"/><path d="M10.37 18.37 L12.07 20.07" stroke="#7f7f7f" stroke-width="2.3"/><path d="M7.40 19.60 L7.40 22.00" stroke="#7f7f7f" stroke-width="2.3"/><path d="M4.43 18.37 L2.73 20.07" stroke="#7f7f7f" stroke-width="2.3"/><path d="M3.20 15.40 L0.80 15.40" stroke="#7f7f7f" stroke-width="2.3"/><path d="M4.43 12.43 L2.73 10.73" stroke="#7f7f7f" stroke-width="2.3"/><path d="M7.40 11.20 L7.40 8.80" stroke="#7f7f7f" stroke-width="2.3"/><path d="M10.37 12.43 L12.07 10.73" stroke="#7f7f7f" stroke-width="2.3"/><circle cx="14" cy="5" r="2.15" fill="none" stroke="#7f7f7f" stroke-width="2.3"/><path d="M16.80 5.00 L19.00 5.00" stroke="#7f7f7f" stroke-width="1.7"/><path d="M15.98 6.98 L17.54 8.54" stroke="#7f7f7f" stroke-width="1.7"/><path d="M14.00 7.80 L14.00 10.00" stroke="#7f7f7f" stroke-width="1.7"/><path d="M12.02 6.98 L10.46 8.54" stroke="#7f7f7f" stroke-width="1.7"/><path d="M11.20 5.00 L9.00 5.00" stroke="#7f7f7f" stroke-width="1.7"/><path d="M12.02 3.02 L10.46 1.46" stroke="#7f7f7f" stroke-width="1.7"/><path d="M14.00 2.20 L14.00 0.00" stroke="#7f7f7f" stroke-width="1.7"/><path d="M15.98 3.02 L17.54 1.46" stroke="#7f7f7f" stroke-width="1.7"/></g></svg>
<div style="left:380px;top:79px;width:13px;height:13px;background:#fff;border:1px solid #333;box-sizing:border-box;"></div>
<span style="left:396px;top:79px;line-height:14px;letter-spacing:0.023px;"><u>R</u>ight to Left</span>
<div style="left:483px;top:79px;width:13px;height:13px;background:#fff;border:1px solid #333;box-sizing:border-box;"></div>
<span style="left:499px;top:79px;line-height:14px;letter-spacing:-0.318px;">Ignore <u>B</u>ase Glyphs</span>
<div style="left:627px;top:79px;width:13px;height:13px;background:#fff;border:1px solid #333;box-sizing:border-box;"></div>
<span style="left:643px;top:79px;line-height:14px;letter-spacing:-0.116px;">Ignore <u>L</u>igatures</span>
<span style="left:751px;top:78px;line-height:14px;letter-spacing:-0.361px;">Process Marks:</span>
<div style="left:835px;top:74px;width:173px;height:23px;background:#e1e1e1;border:1px solid #adadad;box-sizing:border-box;"></div>
<span style="left:839px;top:79px;line-height:14px;letter-spacing:-0.2px;">All</span>
<svg style="left:993.5px;top:82.5px;" width="11" height="8" viewBox="0 0 11 8"><path d="M1.5 1.5 L5.5 5.4 L9.5 1.5" stroke="#505050" stroke-width="1.05" fill="none"/></svg>
<span style="left:1028.4px;top:78px;line-height:14px;letter-spacing:-0.153px;">Mark Filtering Set:</span>
<div style="left:1129px;top:74px;width:18px;height:23px;background:#e1e1e1;border:1px solid #adadad;box-sizing:border-box;border-right:none;"></div>
<div style="left:1133.5px;top:79px;width:13.5px;height:14px;overflow:hidden;"><span style="left:0;top:0;line-height:14px;">No</span></div>
<span style="left:380px;top:106px;line-height:14px;letter-spacing:-0.155px;">1 subtable</span>
<div style="left:455px;top:100px;width:173px;height:23px;background:#e1e1e1;border:1px solid #adadad;box-sizing:border-box;"></div>
<span style="left:459px;top:105px;line-height:14px;letter-spacing:-0.358px;">Subtable 1 (59130)</span>
<svg style="left:613.5px;top:108.5px;" width="11" height="8" viewBox="0 0 11 8"><path d="M1.5 1.5 L5.5 5.4 L9.5 1.5" stroke="#505050" stroke-width="1.05" fill="none"/></svg>
<div style="left:632px;top:101px;width:21px;height:20px;background:#e1e1e1;border:1px solid #adadad;box-sizing:border-box;"></div>
<svg style="left:632px;top:101px;" width="21" height="20" viewBox="0 0 21 20"><circle cx="8.6" cy="13.5" r="2.2" fill="none" stroke="#808080" stroke-width="1.8"/><path d="M11.30 13.50 L13.10 13.50" stroke="#808080" stroke-width="1.3"/><path d="M10.51 15.41 L11.78 16.68" stroke="#808080" stroke-width="1.3"/><path d="M8.60 16.20 L8.60 18.00" stroke="#808080" stroke-width="1.3"/><path d="M6.69 15.41 L5.42 16.68" stroke="#808080" stroke-width="1.3"/><path d="M5.90 13.50 L4.10 13.50" stroke="#808080" stroke-width="1.3"/><path d="M6.69 11.59 L5.42 10.32" stroke="#808080" stroke-width="1.3"/><path d="M8.60 10.80 L8.60 9.00" stroke="#808080" stroke-width="1.3"/><path d="M10.51 11.59 L11.78 10.32" stroke="#808080" stroke-width="1.3"/><circle cx="13.4" cy="6.1" r="2.15" fill="none" stroke="#808080" stroke-width="1.7"/><path d="M16.00 6.10 L17.80 6.10" stroke="#808080" stroke-width="1.3"/><path d="M15.24 7.94 L16.51 9.21" stroke="#808080" stroke-width="1.3"/><path d="M13.40 8.70 L13.40 10.50" stroke="#808080" stroke-width="1.3"/><path d="M11.56 7.94 L10.29 9.21" stroke="#808080" stroke-width="1.3"/><path d="M10.80 6.10 L9.00 6.10" stroke="#808080" stroke-width="1.3"/><path d="M11.56 4.26 L10.29 2.99" stroke="#808080" stroke-width="1.3"/><path d="M13.40 3.50 L13.40 1.70" stroke="#808080" stroke-width="1.3"/><path d="M15.24 4.26 L16.51 2.99" stroke="#808080" stroke-width="1.3"/></svg>
<div style="left:656px;top:101px;width:91px;height:20px;background:#e1e1e1;border:1px solid #adadad;box-sizing:border-box;"></div>
<span style="left:663.5px;top:104px;line-height:14px;letter-spacing:-0.261px;">Clear Subtable</span>
<span style="left:377px;top:146px;line-height:14px;letter-spacing:-1.12px;">Base</span>
<span style="left:508px;top:146px;line-height:14px;letter-spacing:0.109px;">Mark</span>
<div style="left:381px;top:175px;width:22px;height:6px;background:#75a594;"></div>
<div style="left:389px;top:167px;width:6px;height:22px;background:#75a594;"></div>
<div style="left:412px;top:175px;width:22px;height:6px;background:#d76040;"></div>
<div style="left:512px;top:175px;width:22px;height:6px;background:#75a594;"></div>
<div style="left:520px;top:167px;width:6px;height:22px;background:#75a594;"></div>
<div style="left:543px;top:175px;width:22px;height:6px;background:#d76040;"></div>
<div style="left:375px;top:196px;width:131px;height:388px;background:#fff;border:1px solid #828790;box-sizing:border-box;"></div>
<div style="left:506px;top:196px;width:131px;height:388px;background:#fff;border:1px solid #828790;box-sizing:border-box;"></div>
<div style="left:377px;top:198px;width:127px;height:40px;background:#d0e5fc;"></div>
<div style="left:508px;top:198px;width:127px;height:40px;background:#d0e5fc;"></div>
<span style="left:385px;top:203px;line-height:28px;font-size:25px;font-family:'DejaVu Sans',sans-serif;color:#ff0000;">A</span>
<span style="left:421.3px;top:214px;line-height:12px;font-size:11px;color:#ff0000;letter-spacing:-0.177px;">@latn_base_top</span>
<span style="left:552.3px;top:214px;line-height:12px;font-size:11px;color:#ff0000;letter-spacing:-0.221px;">@latn_mark_top</span>
<svg style="left:507px;top:199px;" width="8" height="8" viewBox="0 0 8 8"><path d="M1.2 1.8 L4.6 5.8" stroke="#ff0000" stroke-width="1.5"/></svg>
<svg style="left:638px;top:345px;" width="3" height="28" viewBox="0 0 3 28"><rect x="1" y="1" width="2" height="2" fill="#fff"/><rect x="0" y="0" width="2" height="2" fill="#9a9a9a"/><rect x="1" y="5" width="2" height="2" fill="#fff"/><rect x="0" y="4" width="2" height="2" fill="#9a9a9a"/><rect x="1" y="9" width="2" height="2" fill="#fff"/><rect x="0" y="8" width="2" height="2" fill="#9a9a9a"/><rect x="1" y="13" width="2" height="2" fill="#fff"/><rect x="0" y="12" width="2" height="2" fill="#9a9a9a"/><rect x="1" y="17" width="2" height="2" fill="#fff"/><rect x="0" y="16" width="2" height="2" fill="#9a9a9a"/><rect x="1" y="21" width="2" height="2" fill="#fff"/><rect x="0" y="20" width="2" height="2" fill="#9a9a9a"/><rect x="1" y="25" width="2" height="2" fill="#fff"/><rect x="0" y="24" width="2" height="2" fill="#9a9a9a"/></svg>
<span style="left:651px;top:146px;line-height:14px;letter-spacing:0.107px;">Anchor:</span>
<div style="left:723px;top:141px;width:149px;height:23px;background:#fff;border:1px solid #adadad;box-sizing:border-box;"></div>
<div style="left:853px;top:142px;width:18px;height:21px;background:#e6e6e6;"></div>
<span style="left:727px;top:146px;line-height:14px;letter-spacing:0.156px;">top</span>
<svg style="left:857px;top:150px;" width="11" height="8" viewBox="0 0 11 8"><path d="M1.5 1.5 L5.5 5.4 L9.5 1.5" stroke="#505050" stroke-width="1.05" fill="none"/></svg>
<div style="left:879px;top:142px;width:21px;height:20px;background:#e1e1e1;border:1px solid #adadad;box-sizing:border-box;"></div>
<svg style="left:879px;top:142px;" width="21" height="20" viewBox="0 0 21 20"><circle cx="8.6" cy="13.5" r="2.2" fill="none" stroke="#808080" stroke-width="1.8"/><path d="M11.30 13.50 L13.10 13.50" stroke="#808080" stroke-width="1.3"/><path d="M10.51 15.41 L11.78 16.68" stroke="#808080" stroke-width="1.3"/><path d="M8.60 16.20 L8.60 18.00" stroke="#808080" stroke-width="1.3"/><path d="M6.69 15.41 L5.42 16.68" stroke="#808080" stroke-width="1.3"/><path d="M5.90 13.50 L4.10 13.50" stroke="#808080" stroke-width="1.3"/><path d="M6.69 11.59 L5.42 10.32" stroke="#808080" stroke-width="1.3"/><path d="M8.60 10.80 L8.60 9.00" stroke="#808080" stroke-width="1.3"/><path d="M10.51 11.59 L11.78 10.32" stroke="#808080" stroke-width="1.3"/><circle cx="13.4" cy="6.1" r="2.15" fill="none" stroke="#808080" stroke-width="1.7"/><path d="M16.00 6.10 L17.80 6.10" stroke="#808080" stroke-width="1.3"/><path d="M15.24 7.94 L16.51 9.21" stroke="#808080" stroke-width="1.3"/><path d="M13.40 8.70 L13.40 10.50" stroke="#808080" stroke-width="1.3"/><path d="M11.56 7.94 L10.29 9.21" stroke="#808080" stroke-width="1.3"/><path d="M10.80 6.10 L9.00 6.10" stroke="#808080" stroke-width="1.3"/><path d="M11.56 4.26 L10.29 2.99" stroke="#808080" stroke-width="1.3"/><path d="M13.40 3.50 L13.40 1.70" stroke="#808080" stroke-width="1.3"/><path d="M15.24 4.26 L16.51 2.99" stroke="#808080" stroke-width="1.3"/></svg>
<div style="left:990px;top:142px;width:73px;height:19px;background:#e1e1e1;border:1px solid #adadad;box-sizing:border-box;"></div>
<span style="left:1009.0px;top:145px;line-height:14px;letter-spacing:-0.003px;">&lt; Prev</span>
<div style="left:1065px;top:142px;width:73px;height:19px;background:#e1e1e1;border:1px solid #adadad;box-sizing:border-box;"></div>
<span style="left:1084.0px;top:145px;line-height:14px;letter-spacing:-0.003px;">Next &gt;</span>
<span style="left:651px;top:172px;line-height:14px;letter-spacing:-1.12px;">Base</span>
<div style="left:723px;top:167px;width:149px;height:23px;background:#e1e1e1;border:1px solid #adadad;box-sizing:border-box;"></div>
<span style="left:727px;top:172px;line-height:14px;letter-spacing:-0.2px;">G</span>
<svg style="left:857.5px;top:175.5px;" width="11" height="8" viewBox="0 0 11 8"><path d="M1.5 1.5 L5.5 5.4 L9.5 1.5" stroke="#505050" stroke-width="1.05" fill="none"/></svg>
<span style="left:917px;top:172px;line-height:14px;letter-spacing:0.109px;">Mark</span>
<div style="left:989px;top:167px;width:149px;height:23px;background:#e1e1e1;border:1px solid #adadad;box-sizing:border-box;"></div>
<span style="left:993px;top:172px;line-height:14px;letter-spacing:-0.004px;">tildecomb.case</span>
<svg style="left:1123.5px;top:175.5px;" width="11" height="8" viewBox="0 0 11 8"><path d="M1.5 1.5 L5.5 5.4 L9.5 1.5" stroke="#505050" stroke-width="1.05" fill="none"/></svg>
<div style="left:643px;top:197px;width:500px;height:262px;background:#fff;box-sizing:border-box;border:1px solid #a0a0a0;border-right-color:#fff;border-bottom-color:#fff;"></div>
<div style="left:644px;top:198px;width:498px;height:260px;box-sizing:border-box;border:1px solid #696969;border-right-color:#e3e3e3;border-bottom-color:#e3e3e3;"></div>
<svg style="left:645px;top:199px;overflow:hidden;" width="481" height="242" viewBox="0 0 481 242"><rect x="179" y="0" width="144" height="8" fill="#000080"/><path d="M0 207.5 H481" stroke="#ff0000" stroke-dasharray="3 3" fill="none"/><path d="M179.5 8 V242" stroke="#ff0000" stroke-dasharray="3 3" fill="none"/><path d="M322.5 8 V242" stroke="#000080" stroke-dasharray="3 3" fill="none"/><text x="250.5" y="20.30000000000001" text-anchor="middle" font-family="'Liberation Sans',sans-serif" font-size="10.5" fill="#000080">1587</text><text x="179.5" y="207.5" font-family="'DejaVu Sans',sans-serif" font-size="184.32" fill="#ff9900" stroke="#111" stroke-width="1">G</text><text x="0" y="0" font-family="'DejaVu Sans',sans-serif" font-size="184.32" fill="#ff9900" stroke="#111" stroke-width="1.18" transform="translate(211.22,155.91) scale(0.829,0.865)">˜</text><rect x="235.5" y="58.5" width="29" height="29" fill="none" stroke="#000080"/><path d="M250 59 V87 M236 73 H264" stroke="#ff0000" stroke-width="2"/></svg>
<div style="left:1126px;top:199px;width:15px;height:243px;background:#f0f0f0;"></div>
<div style="left:645px;top:442px;width:496px;height:15px;background:#f0f0f0;"></div>
<div style="left:1126px;top:306px;width:15px;height:17px;background:#cdcdcd;"></div>
<div style="left:887px;top:442px;width:17px;height:15px;background:#cdcdcd;"></div>
<svg style="left:1126px;top:199px;" width="15" height="243" viewBox="0 0 15 243"><path d="M3.6 10.4 L6.5 7 L9.4 10.4 M3.6 232 L6.5 235.4 L9.4 232" stroke="#505050" stroke-width="2.1" fill="none"/></svg>
<svg style="left:645px;top:442px;" width="496" height="16" viewBox="0 0 496 16"><path d="M10.4 3.7 L7 6.5 L10.4 9.3 M470 3.7 L473.4 6.5 L470 9.3" stroke="#505050" stroke-width="2.1" fill="none"/></svg>
<div style="left:643px;top:459px;width:500px;height:125px;box-sizing:border-box;border:1px solid #a0a0a0;border-right-color:#fff;border-bottom-color:#fff;"></div>
<div style="left:644px;top:460px;width:498px;height:123px;box-sizing:border-box;border:1px solid #696969;border-right-color:#e3e3e3;border-bottom-color:#e3e3e3;"></div>
<div style="left:669px;top:467px;width:13px;height:13px;background:#fff;border:1px solid #333;box-sizing:border-box;"></div>
<span style="left:685.5px;top:467px;line-height:14px;letter-spacing:-0.453px;">Lock</span>
<div style="left:757px;top:467px;width:13px;height:13px;background:#fff;border:1px solid #333;box-sizing:border-box;"></div>
<svg style="left:757px;top:467px;" width="13" height="13" viewBox="0 0 13 13"><path d="M2.1 6.7 L5 9.6 L11 3.3" stroke="#3a3a3a" stroke-width="1.25" fill="none"/></svg>
<span style="left:773.5px;top:467px;line-height:14px;letter-spacing:-0.453px;">Lock</span>
<span style="left:671.5px;top:482px;line-height:14px;letter-spacing:-0.2px;">G</span>
<span style="left:759px;top:482px;line-height:14px;letter-spacing:-0.004px;">tildecomb.case</span>
<span style="left:656px;top:506px;line-height:14px;letter-spacing:-0.2px;">X</span>
<span style="left:656px;top:531px;line-height:14px;letter-spacing:-0.2px;">Y</span>
<div style="left:671px;top:501px;width:53px;height:22px;background:#fff;border:1px solid #7a7a7a;box-sizing:border-box;"></div>
<div style="left:708px;top:503px;width:14px;height:18px;background:#ececec;border:1px solid #b4b4b4;box-sizing:border-box;"></div>
<div style="left:708px;top:511px;width:14px;height:1px;background:#b4b4b4;"></div>
<svg style="left:708px;top:503px;" width="14" height="18" viewBox="0 0 14 18"><path d="M4 6.300000000000001 L7 3.1 L10 6.300000000000001Z M4 11.700000000000001 L7 14.9 L10 11.700000000000001Z" fill="#000"/></svg>
<span style="left:685.77px;top:505px;line-height:14px;letter-spacing:-0.2px;">784</span>
<div style="left:671px;top:525px;width:53px;height:22px;background:#fff;border:1px solid #7a7a7a;box-sizing:border-box;"></div>
<div style="left:708px;top:527px;width:14px;height:18px;background:#ececec;border:1px solid #b4b4b4;box-sizing:border-box;"></div>
<div style="left:708px;top:535px;width:14px;height:1px;background:#b4b4b4;"></div>
<svg style="left:708px;top:527px;" width="14" height="18" viewBox="0 0 14 18"><path d="M4 6.300000000000001 L7 3.1 L10 6.300000000000001Z M4 11.700000000000001 L7 14.9 L10 11.700000000000001Z" fill="#000"/></svg>
<span style="left:679.3px;top:529px;line-height:14px;letter-spacing:-0.2px;">1493</span>
<div style="left:759px;top:501px;width:53px;height:22px;background:#fff;border:1px solid #7a7a7a;box-sizing:border-box;"></div>
<div style="left:796px;top:503px;width:14px;height:18px;background:#ececec;border:1px solid #b4b4b4;box-sizing:border-box;"></div>
<div style="left:796px;top:511px;width:14px;height:1px;background:#b4b4b4;"></div>
<svg style="left:796px;top:503px;" width="14" height="18" viewBox="0 0 14 18"><path d="M4 6.300000000000001 L7 3.1 L10 6.300000000000001Z M4 11.700000000000001 L7 14.9 L10 11.700000000000001Z" fill="#000"/></svg>
<span style="left:769.97px;top:505px;line-height:14px;letter-spacing:-0.2px;">-308</span>
<div style="left:759px;top:525px;width:53px;height:22px;background:#fff;border:1px solid #7a7a7a;box-sizing:border-box;"></div>
<div style="left:796px;top:527px;width:14px;height:18px;background:#ececec;border:1px solid #b4b4b4;box-sizing:border-box;"></div>
<div style="left:796px;top:535px;width:14px;height:1px;background:#b4b4b4;"></div>
<svg style="left:796px;top:527px;" width="14" height="18" viewBox="0 0 14 18"><path d="M4 6.300000000000001 L7 3.1 L10 6.300000000000001Z M4 11.700000000000001 L7 14.9 L10 11.700000000000001Z" fill="#000"/></svg>
<span style="left:767.3px;top:529px;line-height:14px;letter-spacing:-0.2px;">1493</span>
<div style="left:672px;top:554px;width:73px;height:23px;background:#e1e1e1;border:1px solid #adadad;box-sizing:border-box;"></div>
<span style="left:685.5px;top:559px;line-height:14px;letter-spacing:-0.29px;">All Same</span>
<div style="left:760px;top:554px;width:73px;height:23px;background:#e1e1e1;border:1px solid #adadad;box-sizing:border-box;"></div>
<span style="left:773.5px;top:559px;line-height:14px;letter-spacing:-0.29px;">All Same</span>
<div style="left:856px;top:502px;width:73px;height:23px;background:#e1e1e1;border:1px solid #adadad;box-sizing:border-box;"></div>
<span style="left:878.5px;top:507px;line-height:14px;letter-spacing:-0.84px;">Reset</span>
<div style="left:856px;top:534px;width:73px;height:23px;background:#e1e1e1;border:1px solid #adadad;box-sizing:border-box;"></div>
<span style="left:879.0px;top:539px;line-height:14px;letter-spacing:-0.422px;">Clear</span>
<svg style="left:561px;top:593px;" width="28" height="3" viewBox="0 0 28 3"><rect x="1" y="1" width="2" height="2" fill="#fff"/><rect x="0" y="0" width="2" height="2" fill="#9a9a9a"/><rect x="5" y="1" width="2" height="2" fill="#fff"/><rect x="4" y="0" width="2" height="2" fill="#9a9a9a"/><rect x="9" y="1" width="2" height="2" fill="#fff"/><rect x="8" y="0" width="2" height="2" fill="#9a9a9a"/><rect x="13" y="1" width="2" height="2" fill="#fff"/><rect x="12" y="0" width="2" height="2" fill="#9a9a9a"/><rect x="17" y="1" width="2" height="2" fill="#fff"/><rect x="16" y="0" width="2" height="2" fill="#9a9a9a"/><rect x="21" y="1" width="2" height="2" fill="#fff"/><rect x="20" y="0" width="2" height="2" fill="#9a9a9a"/><rect x="25" y="1" width="2" height="2" fill="#fff"/><rect x="24" y="0" width="2" height="2" fill="#9a9a9a"/></svg>
<div style="left:8px;top:602px;width:104px;height:23px;background:#e1e1e1;border:1px solid #adadad;box-sizing:border-box;"></div>
<span style="left:12px;top:607px;line-height:14px;letter-spacing:0.438px;">Auto</span>
<svg style="left:97.5px;top:610.5px;" width="11" height="8" viewBox="0 0 11 8"><path d="M1.5 1.5 L5.5 5.4 L9.5 1.5" stroke="#505050" stroke-width="1.05" fill="none"/></svg>
<div style="left:118px;top:602px;width:104px;height:23px;background:#e1e1e1;border:1px solid #adadad;box-sizing:border-box;"></div>
<span style="left:122px;top:607px;line-height:14px;letter-spacing:0.438px;">Auto</span>
<svg style="left:207.5px;top:610.5px;" width="11" height="8" viewBox="0 0 11 8"><path d="M1.5 1.5 L5.5 5.4 L9.5 1.5" stroke="#505050" stroke-width="1.05" fill="none"/></svg>
<div style="left:232px;top:602px;width:104px;height:23px;background:#e1e1e1;border:1px solid #adadad;box-sizing:border-box;"></div>
<span style="left:236px;top:607px;line-height:14px;letter-spacing:0.131px;">Custom</span>
<svg style="left:321.5px;top:610.5px;" width="11" height="8" viewBox="0 0 11 8"><path d="M1.5 1.5 L5.5 5.4 L9.5 1.5" stroke="#505050" stroke-width="1.05" fill="none"/></svg>
<div style="left:341px;top:602px;width:49px;height:23px;background:#fff;border:1px solid #7a7a7a;box-sizing:border-box;"></div>
<div style="left:374px;top:604px;width:14px;height:19px;background:#ececec;border:1px solid #b4b4b4;box-sizing:border-box;"></div>
<div style="left:374px;top:613px;width:14px;height:2px;background:#b4b4b4;"></div>
<svg style="left:374px;top:604px;" width="14" height="19" viewBox="0 0 14 19"><path d="M4 6.300000000000001 L7 3.1 L10 6.300000000000001Z M4 12.700000000000001 L7 15.9 L10 12.700000000000001Z" fill="#000"/></svg>
<span style="left:364.71px;top:606px;line-height:14px;letter-spacing:-0.2px;">1</span>
<div style="left:9px;top:630px;width:381px;height:120px;background:#fff;border:1px solid #828790;box-sizing:border-box;"></div>
<div style="left:13px;top:634px;width:11px;height:11px;background:#fff;border:1px solid #a8a8a8;box-sizing:border-box;"></div>
<span style="left:28.3px;top:633px;line-height:14px;letter-spacing:-0.629px;">_shaper</span>
<div style="left:13px;top:649px;width:11px;height:11px;background:#fff;border:1px solid #a8a8a8;box-sizing:border-box;"></div>
<span style="left:28.3px;top:648px;line-height:14px;letter-spacing:-0.272px;">afrc</span>
<div style="left:13px;top:664px;width:11px;height:11px;background:#fff;border:1px solid #a8a8a8;box-sizing:border-box;"></div>
<span style="left:28.3px;top:663px;line-height:14px;letter-spacing:-0.453px;">c2pc</span>
<div style="left:13px;top:679px;width:11px;height:11px;background:#fff;border:1px solid #a8a8a8;box-sizing:border-box;"></div>
<span style="left:28.3px;top:678px;line-height:14px;letter-spacing:-0.796px;">c2sc</span>
<div style="left:13px;top:694px;width:11px;height:11px;background:#fff;border:1px solid #a8a8a8;box-sizing:border-box;"></div>
<svg style="left:13px;top:694px;" width="11" height="11" viewBox="0 0 11 11"><path d="M1.1 5.7 L3.9 8.5 L10 2.4" stroke="#3a3a3a" stroke-width="1.25" fill="none"/></svg>
<span style="left:28.3px;top:693px;line-height:14px;letter-spacing:0.109px;">ccmp</span>
<div style="left:13px;top:709px;width:11px;height:11px;background:#fff;border:1px solid #a8a8a8;box-sizing:border-box;"></div>
<span style="left:28.3px;top:708px;line-height:14px;letter-spacing:-0.453px;">cpsp</span>
<div style="left:13px;top:724px;width:11px;height:11px;background:#fff;border:1px solid #a8a8a8;box-sizing:border-box;"></div>
<span style="left:28.3px;top:723px;line-height:14px;letter-spacing:-0.82px;">cv01</span>
<div style="left:88px;top:634px;width:11px;height:11px;background:#fff;border:1px solid #a8a8a8;box-sizing:border-box;"></div>
<span style="left:103.3px;top:633px;line-height:14px;letter-spacing:0.104px;">dlig</span>
<div style="left:88px;top:649px;width:11px;height:11px;background:#fff;border:1px solid #a8a8a8;box-sizing:border-box;"></div>
<span style="left:103.3px;top:648px;line-height:14px;letter-spacing:0.323px;">dnom</span>
<div style="left:88px;top:664px;width:11px;height:11px;background:#fff;border:1px solid #a8a8a8;box-sizing:border-box;"></div>
<span style="left:103.3px;top:663px;line-height:14px;letter-spacing:-0.12px;">fina</span>
<div style="left:88px;top:679px;width:11px;height:11px;background:#fff;border:1px solid #a8a8a8;box-sizing:border-box;"></div>
<span style="left:103.3px;top:678px;line-height:14px;letter-spacing:-0.339px;">frac</span>
<div style="left:88px;top:694px;width:11px;height:11px;background:#fff;border:1px solid #a8a8a8;box-sizing:border-box;"></div>
<span style="left:103.3px;top:693px;line-height:14px;letter-spacing:-0.163px;">hist</span>
<div style="left:88px;top:709px;width:11px;height:11px;background:#fff;border:1px solid #a8a8a8;box-sizing:border-box;"></div>
<span style="left:103.3px;top:708px;line-height:14px;letter-spacing:0.104px;">hlig</span>
<div style="left:88px;top:724px;width:11px;height:11px;background:#fff;border:1px solid #a8a8a8;box-sizing:border-box;"></div>
<span style="left:103.3px;top:723px;line-height:14px;letter-spacing:-0.448px;">kern</span>
<div style="left:163px;top:634px;width:11px;height:11px;background:#fff;border:1px solid #a8a8a8;box-sizing:border-box;"></div>
<span style="left:178.3px;top:633px;line-height:14px;letter-spacing:-0.163px;">liga</span>
<div style="left:176px;top:647px;width:60px;height:15px;background:#0078d7;"></div>
<div style="left:163px;top:649px;width:11px;height:11px;background:#fff;border:1px solid #a8a8a8;box-sizing:border-box;"></div>
<svg style="left:163px;top:649px;" width="11" height="11" viewBox="0 0 11 11"><path d="M1.1 5.7 L3.9 8.5 L10 2.4" stroke="#3a3a3a" stroke-width="1.25" fill="none"/></svg>
<span style="left:178.3px;top:648px;line-height:14px;color:#fff;letter-spacing:-0.057px;">mark</span>
<div style="left:163px;top:664px;width:11px;height:11px;background:#fff;border:1px solid #a8a8a8;box-sizing:border-box;"></div>
<svg style="left:163px;top:664px;" width="11" height="11" viewBox="0 0 11 11"><path d="M1.1 5.7 L3.9 8.5 L10 2.4" stroke="#3a3a3a" stroke-width="1.25" fill="none"/></svg>
<span style="left:178.3px;top:663px;line-height:14px;letter-spacing:0.333px;">mkmk</span>
<div style="left:163px;top:679px;width:11px;height:11px;background:#fff;border:1px solid #a8a8a8;box-sizing:border-box;"></div>
<span style="left:178.3px;top:678px;line-height:14px;letter-spacing:-0.12px;">nalt</span>
<div style="left:163px;top:694px;width:11px;height:11px;background:#fff;border:1px solid #a8a8a8;box-sizing:border-box;"></div>
<span style="left:178.3px;top:693px;line-height:14px;letter-spacing:0.419px;">numr</span>
<div style="left:163px;top:709px;width:11px;height:11px;background:#fff;border:1px solid #a8a8a8;box-sizing:border-box;"></div>
<span style="left:178.3px;top:708px;line-height:14px;letter-spacing:0.323px;">onum</span>
<div style="left:163px;top:724px;width:11px;height:11px;background:#fff;border:1px solid #a8a8a8;box-sizing:border-box;"></div>
<span style="left:178.3px;top:723px;line-height:14px;letter-spacing:-0.444px;">ordn</span>
<div style="left:238px;top:634px;width:11px;height:11px;background:#fff;border:1px solid #a8a8a8;box-sizing:border-box;"></div>
<span style="left:253.3px;top:633px;line-height:14px;letter-spacing:0.152px;">ornm</span>
<div style="left:238px;top:649px;width:11px;height:11px;background:#fff;border:1px solid #a8a8a8;box-sizing:border-box;"></div>
<span style="left:253.3px;top:648px;line-height:14px;letter-spacing:-0.41px;">pcap</span>
<div style="left:238px;top:664px;width:11px;height:11px;background:#fff;border:1px solid #a8a8a8;box-sizing:border-box;"></div>
<span style="left:253.3px;top:663px;line-height:14px;letter-spacing:-0.429px;">salt</span>
<div style="left:238px;top:679px;width:11px;height:11px;background:#fff;border:1px solid #a8a8a8;box-sizing:border-box;"></div>
<span style="left:253.3px;top:678px;line-height:14px;letter-spacing:-0.263px;">sinf</span>
<div style="left:238px;top:694px;width:11px;height:11px;background:#fff;border:1px solid #a8a8a8;box-sizing:border-box;"></div>
<span style="left:253.3px;top:693px;line-height:14px;letter-spacing:-0.291px;">smcp</span>
<div style="left:238px;top:709px;width:11px;height:11px;background:#fff;border:1px solid #a8a8a8;box-sizing:border-box;"></div>
<span style="left:253.3px;top:708px;line-height:14px;letter-spacing:-1.62px;">ss01</span>
<div style="left:238px;top:724px;width:11px;height:11px;background:#fff;border:1px solid #a8a8a8;box-sizing:border-box;"></div>
<span style="left:253.3px;top:723px;line-height:14px;letter-spacing:-1.62px;">ss02</span>
<div style="left:313px;top:634px;width:11px;height:11px;background:#fff;border:1px solid #a8a8a8;box-sizing:border-box;"></div>
<span style="left:328.3px;top:633px;line-height:14px;letter-spacing:-0.52px;">subs</span>
<div style="left:313px;top:649px;width:11px;height:11px;background:#fff;border:1px solid #a8a8a8;box-sizing:border-box;"></div>
<span style="left:328.3px;top:648px;line-height:14px;letter-spacing:-0.52px;">sups</span>
<div style="left:401px;top:602px;width:57px;height:23px;background:#fff;border:1px solid #7a7a7a;box-sizing:border-box;"></div>
<div style="left:442px;top:604px;width:14px;height:19px;background:#ececec;border:1px solid #b4b4b4;box-sizing:border-box;"></div>
<div style="left:442px;top:613px;width:14px;height:2px;background:#b4b4b4;"></div>
<svg style="left:442px;top:604px;" width="14" height="19" viewBox="0 0 14 19"><path d="M4 6.300000000000001 L7 3.1 L10 6.300000000000001Z M4 12.700000000000001 L7 15.9 L10 12.700000000000001Z" fill="#000"/></svg>
<span style="left:426.24px;top:606px;line-height:14px;letter-spacing:-0.2px;">48</span>
<div style="left:465px;top:602px;width:645px;height:23px;background:#fff;border:1px solid #7a7a7a;box-sizing:border-box;"></div>
<span style="left:468.5px;top:606px;line-height:14px;letter-spacing:0.312px;">G/tildecomb/i/dieresiscomb p/a/circumflexcomb/t/e/acutecomb d/a/circumflexcomb/acutecomb/u</span>
<svg style="left:1095.5px;top:610.1px;" width="11" height="8" viewBox="0 0 11 8"><path d="M1.5 1.5 L5.5 5.4 L9.5 1.5" stroke="#505050" stroke-width="1.05" fill="none"/></svg>
<div style="left:1119px;top:603px;width:23px;height:19px;background:#e1e1e1;border:1px solid #adadad;box-sizing:border-box;"></div>
<span style="left:1126.99px;top:606px;line-height:14px;letter-spacing:-0.2px;">+</span>
<div style="left:401px;top:630px;width:742px;height:1px;background:#8e8e8e;"></div>
<div style="left:401px;top:631px;width:742px;height:94px;background:#fff;"></div>
<span style="left:408.6px;top:646.5px;line-height:72px;font-size:64px;font-family:'DejaVu Sans',sans-serif;">G̃ï pâté dấu</span>
<div style="left:401px;top:727px;width:741px;height:23px;background:#f0f0f0;border:1px solid #7a7a7a;box-sizing:border-box;"></div>
<span style="left:404.5px;top:731px;line-height:14px;letter-spacing:0.24px;">/G/tildecomb.case/idotless/dieresiscomb.narrow/space/p/a/circumflexcomb/t/e/acutecomb/space/d/a/circumflexcomb/acutecomb/u</span>
<div style="left:10px;top:762px;width:63px;height:23px;background:#e1e1e1;border:1px solid #adadad;box-sizing:border-box;"></div>
<span style="left:19.0px;top:767px;line-height:14px;letter-spacing:0.123px;"><u>I</u>mport...</span>
<div style="left:82px;top:762px;width:63px;height:23px;background:#e1e1e1;border:1px solid #adadad;box-sizing:border-box;"></div>
<span style="left:97.0px;top:767px;line-height:14px;letter-spacing:-0.338px;"><u>E</u>xport</span>
<div style="left:154px;top:762px;width:63px;height:23px;background:#e1e1e1;border:1px solid #adadad;box-sizing:border-box;"></div>
<span style="left:172.0px;top:767px;line-height:14px;letter-spacing:-0.422px;">Clear</span>
<div style="left:228px;top:762px;width:95px;height:23px;background:#e1e1e1;border:1px solid #adadad;box-sizing:border-box;"></div>
<span style="left:240.5px;top:767px;line-height:14px;letter-spacing:-0.209px;">Co<u>d</u>e Editor...</span>
<div style="left:334px;top:762px;width:95px;height:23px;background:#e1e1e1;border:1px solid #adadad;box-sizing:border-box;"></div>
<span style="left:345.5px;top:767px;line-height:14px;letter-spacing:-0.31px;">Kern Wizard...</span>
<div style="left:770px;top:762px;width:73px;height:23px;background:#e1e1e1;border:1px solid #adadad;box-sizing:border-box;"></div>
<span style="left:791.5px;top:767px;line-height:14px;letter-spacing:-0.008px;"><u>A</u>pply</span>
<div style="left:872px;top:762px;width:81px;height:23px;background:#e1e1e1;border:2px solid #0078d7;box-sizing:border-box;"></div>
<div style="left:875px;top:765px;width:75px;height:17px;border:1px dotted #000;box-sizing:border-box;"></div>
<span style="left:904.5px;top:767px;line-height:14px;letter-spacing:-1.344px;"><u>O</u>K</span>
<div style="left:965px;top:762px;width:81px;height:23px;background:#e1e1e1;border:1px solid #adadad;box-sizing:border-box;"></div>
<span style="left:988.0px;top:767px;line-height:14px;letter-spacing:-0.472px;"><u>C</u>ancel</span>
<div style="left:1061px;top:762px;width:81px;height:23px;background:#e1e1e1;border:1px solid #adadad;box-sizing:border-box;"></div>
<span style="left:1089.5px;top:767px;line-height:14px;letter-spacing:-0.229px;"><u>H</u>elp</span>
<div style="left:0px;top:0px;width:1152px;height:794px;box-sizing:border-box;border:1px solid #0a7ad6;pointer-events:none;"></div>
</div></body></html>
